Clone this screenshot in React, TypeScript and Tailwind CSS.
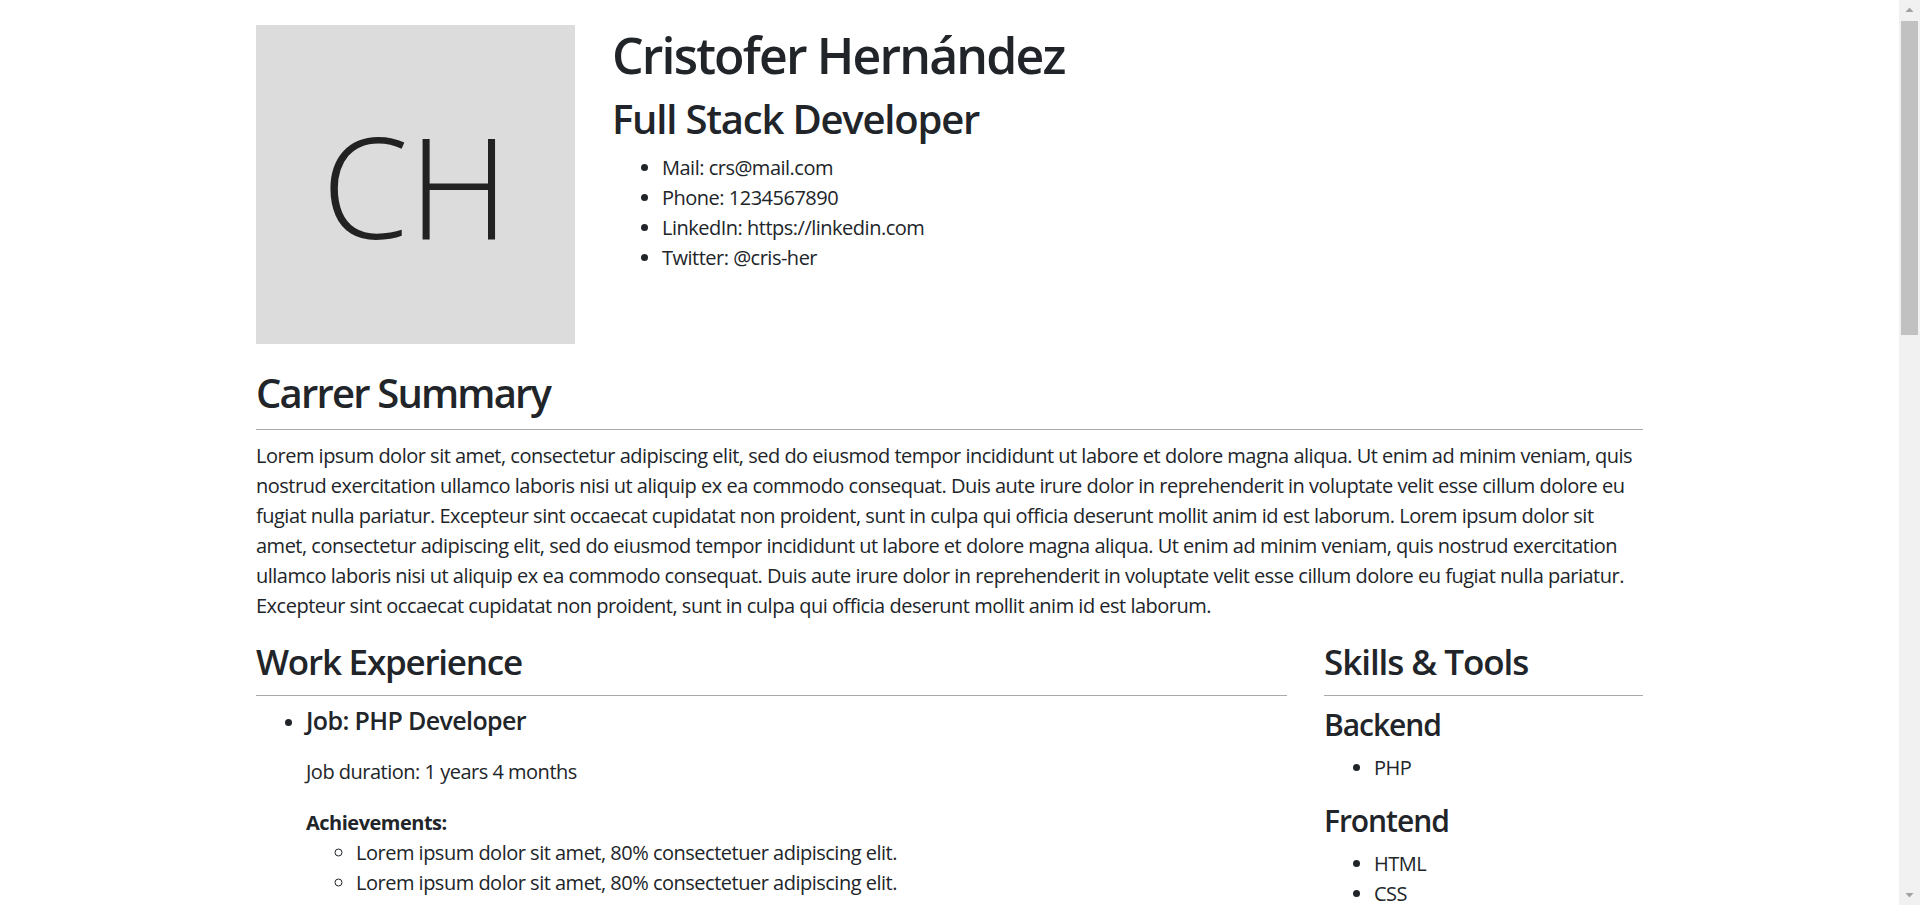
const contact = [
  "Mail: crs@mail.com",
  "Phone: 1234567890",
  "LinkedIn: https://linkedin.com",
  "Twitter: @cris-her",
];

const summary =
  "Lorem ipsum dolor sit amet, consectetur adipiscing elit, sed do eiusmod tempor incididunt ut labore et dolore magna aliqua. Ut enim ad minim veniam, quis nostrud exercitation ullamco laboris nisi ut aliquip ex ea commodo consequat. Duis aute irure dolor in reprehenderit in voluptate velit esse cillum dolore eu fugiat nulla pariatur. Excepteur sint occaecat cupidatat non proident, sunt in culpa qui officia deserunt mollit anim id est laborum. Lorem ipsum dolor sit amet, consectetur adipiscing elit, sed do eiusmod tempor incididunt ut labore et dolore magna aliqua. Ut enim ad minim veniam, quis nostrud exercitation ullamco laboris nisi ut aliquip ex ea commodo consequat. Duis aute irure dolor in reprehenderit in voluptate velit esse cillum dolore eu fugiat nulla pariatur. Excepteur sint occaecat cupidatat non proident, sunt in culpa qui officia deserunt mollit anim id est laborum.";

const jobs = [
  { title: "PHP Developer", duration: "1 years 4 months" },
  { title: "Full Stack Developer", duration: "2 years 1 months" },
  { title: "Frontend Developer", duration: "1 years 8 months" },
  { title: "Web Developer", duration: "0 years 11 months" },
];

const achievement = "Lorem ipsum dolor sit amet, 80% consectetuer adipiscing elit.";

const skills = [
  { group: "Backend", items: ["PHP"] },
  { group: "Frontend", items: ["HTML", "CSS", "JavaScript", "Bootstrap"] },
  { group: "Databases", items: ["MySQL", "PostgreSQL"] },
  { group: "Tools", items: ["Git", "Docker", "Composer"] },
];

function Scrollbar() {
  // browser scrollbar as seen in the screenshot
  return (
    <div className="fixed top-0 right-0 h-screen w-[21px] bg-[#f1f1f1] flex flex-col items-center">
      <svg width="21" height="17" viewBox="0 0 21 17" className="shrink-0">
        <path d="M6.5 12 L10.5 7.5 L14.5 12 Z" fill="#a3a3a3" />
      </svg>
      <div className="mt-[4px] w-[17px] h-[314px] bg-[#c1c1c1]" />
      <div className="flex-1" />
      <svg width="21" height="17" viewBox="0 0 21 17" className="shrink-0">
        <path d="M6.5 5 L10.5 9.5 L14.5 5 Z" fill="#a3a3a3" />
      </svg>
    </div>
  );
}

export default function App() {
  return (
    <div className="min-h-screen bg-white text-[#212529] font-['Open_Sans','Noto_Sans',sans-serif] tracking-[-0.025em] text-[20px] leading-[30px]">
      <div className="mr-[21px]">
        <div className="mx-auto w-[1387px] pt-[25px] pb-[60px]">
          {/* header */}
          <div className="flex gap-[37px]">
            <div className="w-[319px] h-[319px] shrink-0 bg-[#dcdcdc] flex items-center justify-center">
              <span className="text-[140px] leading-none font-light text-[#222] tracking-normal">CH</span>
            </div>
            <div>
              <h1 className="text-[50px] leading-[60px] font-semibold tracking-[-0.037em] mb-[10px]">Cristofer Hernández</h1>
              <h2 className="text-[40px] leading-[48px] font-semibold tracking-[-0.03em] mb-[10px]">Full Stack Developer</h2>
              <ul className="list-disc pl-[50px]">
                {contact.map((c) => (
                  <li key={c}>{c}</li>
                ))}
              </ul>
            </div>
          </div>

          {/* summary */}
          <h2 className="mt-[25px] text-[40px] leading-[48px] font-semibold tracking-[-0.045em] mb-[12px]">Carrer Summary</h2>
          <hr className="border-[#a9a9a9]" />
          <p className="mt-[11px] mb-[20px]">{summary}</p>

          <div className="flex gap-[37px]">
            <div className="w-[1031px]">
              <h3 className="text-[35px] leading-[42px] font-semibold tracking-[-0.035em] mb-[12px]">Work Experience</h3>
              <hr className="border-[#a9a9a9]" />
              <ul className="list-disc pl-[50px] mt-[9px]">
                {jobs.map((j, i) => (
                  <li key={i} className="mb-[20px]">
                    <h5 className="text-[25px] leading-[30px] font-semibold tracking-[-0.025em] mb-[22px]">Job: {j.title}</h5>
                    <p className="mb-[21px]">Job duration: {j.duration}</p>
                    <p className="font-bold">Achievements:</p>
                    <ul className="list-[circle] pl-[50px]">
                      <li>{achievement}</li>
                      <li>{achievement}</li>
                      <li>{achievement}</li>
                    </ul>
                  </li>
                ))}
              </ul>

              <h3 className="mt-[30px] text-[35px] leading-[42px] font-semibold tracking-[-0.035em] mb-[12px]">Education</h3>
              <hr className="border-[#a9a9a9]" />
              <ul className="list-disc pl-[50px] mt-[10px]">
                <li>
                  <h5 className="text-[25px] leading-[30px] font-semibold tracking-[-0.025em] mb-[10px]">Computer Systems Engineering</h5>
                  <p>Lorem ipsum dolor sit amet, consectetur adipiscing elit.</p>
                </li>
              </ul>
            </div>

            <div className="w-[319px]">
              <h3 className="text-[35px] leading-[42px] font-semibold tracking-[-0.03em] mb-[12px]">Skills &amp; Tools</h3>
              <hr className="border-[#a9a9a9]" />
              <div className="mt-[11px]">
                {skills.map((s) => (
                  <div key={s.group}>
                    <h4 className="text-[30px] leading-[36px] font-semibold tracking-[-0.035em] mb-[10px]">{s.group}</h4>
                    <ul className="list-disc pl-[50px] mb-[20px]">
                      {s.items.map((it) => (
                        <li key={it}>{it}</li>
                      ))}
                    </ul>
                  </div>
                ))}
              </div>
            </div>
          </div>
        </div>
      </div>
      <Scrollbar />
    </div>
  );
}
